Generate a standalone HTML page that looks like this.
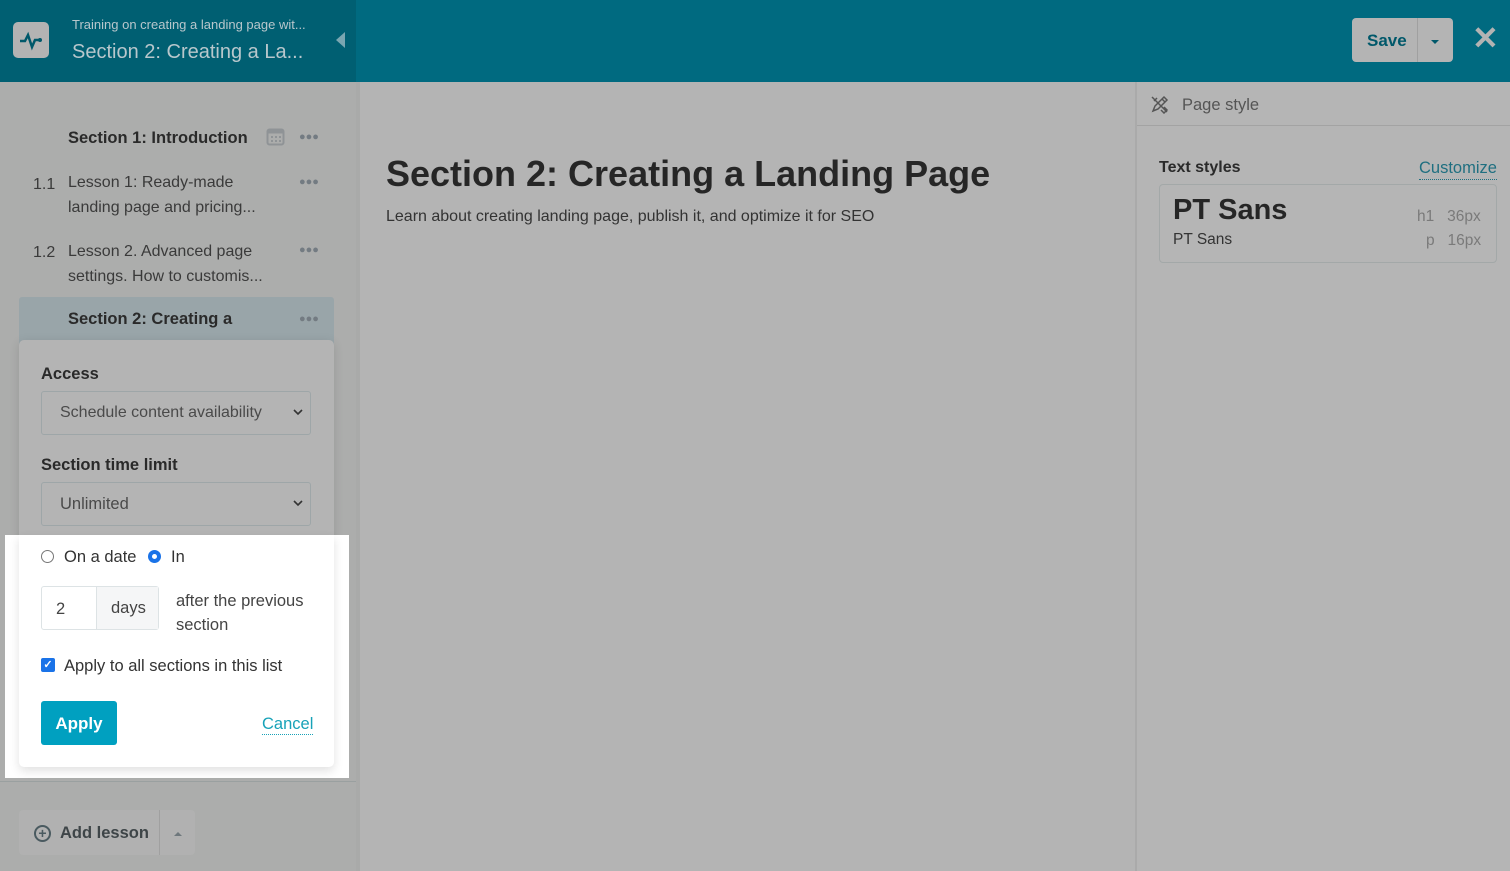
<!DOCTYPE html>
<html><head><style>
*{box-sizing:border-box;margin:0;padding:0}
body{width:1510px;height:871px;overflow:hidden;font-family:"Liberation Sans",sans-serif;background:#b4b4b4;position:relative;color:#2a2a2a}
.a{position:absolute}
.dots{position:absolute;color:#737b82;font-size:11px;letter-spacing:0px;font-weight:bold}
</style></head><body>
<div class="a" style="left:0;top:0;width:1510px;height:82px;background:#006a80"></div>
<div class="a" style="left:0;top:0;width:356px;height:82px;background:#005f72"></div>
<div class="a" style="left:13px;top:22px;width:36px;height:36px;background:#b3b3b3;border-radius:5px"></div>
<svg class="a" style="left:13px;top:22px" width="36" height="36"><path d="M7 19h5l3-6 4 12 3-7h5" stroke="#00586a" stroke-width="2.5" fill="none"/><circle cx="27" cy="18" r="2" fill="#00586a"/></svg>
<div class="a" style="left:72px;top:17px;font-size:13px;color:#b8c7cc">Training on creating a landing page wit...</div>
<div class="a" style="left:72px;top:41px;font-size:20px;color:#b8c7cc">Section 2: Creating a La...</div>
<div class="a" style="left:336px;top:32px;width:0;height:0;border-top:8px solid transparent;border-bottom:8px solid transparent;border-right:9px solid #7aa6b1"></div>
<div class="a" style="left:1352px;top:18px;width:101px;height:44px;background:#b4b4b4;border-radius:4px"></div>
<div class="a" style="left:1417px;top:18px;width:1px;height:44px;background:#a0a0a0"></div>
<div class="a" style="left:1367px;top:31px;font-size:17px;font-weight:bold;color:#00586a">Save</div>
<div class="a" style="left:1431px;top:40px;border-left:4px solid transparent;border-right:4px solid transparent;border-top:4px solid #00586a"></div>
<div class="a" style="left:1472px;top:22px;font-size:32px;color:#b3b3b3;font-weight:bold;line-height:32px">✕</div>

<div class="a" style="left:0;top:82px;width:356px;height:789px;background:#acadac"></div>
<div class="a" style="left:356px;top:82px;width:4px;height:789px;background:#a9aaa9"></div>
<div class="a" style="left:1135px;top:82px;width:375px;height:789px;background:#b5b5b5;border-left:2px solid #aaa"></div>

<div class="a" style="left:68px;top:129px;font-size:16.5px;font-weight:bold">Section 1: Introduction</div>
<svg class="a" style="left:266px;top:127px" width="19" height="19"><rect x="1.5" y="2.5" width="16" height="15" rx="2" fill="none" stroke="#8f9396" stroke-width="2"/><rect x="1.5" y="2.5" width="16" height="4" fill="#8f9396"/><g fill="#8f9396"><rect x="5" y="9" width="2" height="2"/><rect x="9" y="9" width="2" height="2"/><rect x="13" y="9" width="2" height="2"/><rect x="5" y="13" width="2" height="2"/><rect x="9" y="13" width="2" height="2"/><rect x="13" y="13" width="2" height="2"/></g></svg>
<div class="dots" style="left:299px;top:131px">●●●</div>
<div class="a" style="left:33px;top:172px;font-size:16px;line-height:25px;color:#3a3a3a">1.1</div>
<div class="a" style="left:68px;top:170px;font-size:16px;line-height:25px;color:#3a3a3a">Lesson 1: Ready-made<br>landing page and pricing...</div>
<div class="dots" style="left:299px;top:176px">●●●</div>
<div class="a" style="left:33px;top:240px;font-size:16px;line-height:25px;color:#3a3a3a">1.2</div>
<div class="a" style="left:68px;top:239px;font-size:16px;line-height:25px;color:#3a3a3a">Lesson 2. Advanced page<br>settings. How to customis...</div>
<div class="dots" style="left:299px;top:244px">●●●</div>
<div class="a" style="left:19px;top:297px;width:315px;height:50px;background:#99a5a9;border-radius:3px"></div>
<div class="a" style="left:68px;top:310px;font-size:16.5px;font-weight:bold">Section 2: Creating a</div>
<div class="dots" style="left:299px;top:313px">●●●</div>

<div class="a" style="left:19px;top:340px;width:315px;height:427px;background:#b4b4b4;border-radius:5px;box-shadow:0 2px 10px rgba(0,0,0,.12)"></div>
<div class="a" style="left:41px;top:365px;font-size:16.5px;font-weight:bold">Access</div>
<div class="a" style="left:41px;top:391px;width:270px;height:44px;border:1px solid #9ea6a8;border-radius:3px"></div>
<div class="a" style="left:60px;top:404px;font-size:16px;color:#4a4a4a">Schedule content availability</div>
<svg class="a" style="left:293px;top:409px" width="10" height="7"><path d="M1 1l4 4 4-4" stroke="#333" stroke-width="1.6" fill="none"/></svg>
<div class="a" style="left:41px;top:456px;font-size:16.5px;font-weight:bold">Section time limit</div>
<div class="a" style="left:41px;top:482px;width:270px;height:44px;border:1px solid #9ea6a8;border-radius:3px"></div>
<div class="a" style="left:60px;top:495px;font-size:16.5px;color:#4a4a4a">Unlimited</div>
<svg class="a" style="left:293px;top:500px" width="10" height="7"><path d="M1 1l4 4 4-4" stroke="#333" stroke-width="1.6" fill="none"/></svg>

<div class="a" style="left:5px;top:535px;width:344px;height:243px;background:#fff"></div>
<div class="a" style="left:19px;top:535px;width:315px;height:232px;background:#fff;border-radius:0 0 5px 5px;box-shadow:0 4px 10px rgba(0,0,0,.12)"></div>
<div class="a" style="left:41px;top:550px;width:13px;height:13px;border:1px solid #777;border-radius:50%"></div>
<div class="a" style="left:64px;top:548px;font-size:16.5px;color:#333">On a date</div>
<div class="a" style="left:148px;top:550px;width:13px;height:13px;border:4px solid #1a73e8;border-radius:50%;background:#fff"></div>
<div class="a" style="left:171px;top:548px;font-size:16.5px;color:#333">In</div>
<div class="a" style="left:41px;top:586px;width:118px;height:44px;border:1px solid #dde3e5;border-radius:3px"></div>
<div class="a" style="left:96px;top:587px;width:62px;height:42px;background:#f5f6f7;border-left:1px solid #dde3e5"></div>
<div class="a" style="left:56px;top:600px;font-size:16.5px;color:#444">2</div>
<div class="a" style="left:111px;top:599px;font-size:16.5px;color:#444">days</div>
<div class="a" style="left:176px;top:589px;font-size:16.5px;line-height:24px;color:#444">after the previous<br>section</div>
<div class="a" style="left:41px;top:658px;width:14px;height:14px;background:#1a73e8;border-radius:2px;color:#fff;font-size:11px;line-height:14px;text-align:center;font-weight:bold">✓</div>
<div class="a" style="left:64px;top:657px;font-size:16.5px;color:#333">Apply to all sections in this list</div>
<div class="a" style="left:41px;top:701px;width:76px;height:44px;background:#00a0c0;border-radius:3px;color:#fff;font-weight:bold;font-size:17px;text-align:center;line-height:46px">Apply</div>
<div class="a" style="left:262px;top:714px;font-size:16.5px;color:#17a2b8;border-bottom:1px dotted #17a2b8;line-height:20px">Cancel</div>

<div class="a" style="left:0;top:781px;width:356px;height:1px;background:#9aa0a0"></div>
<div class="a" style="left:19px;top:810px;width:176px;height:45px;background:#b1b1b1;border-radius:4px"></div>
<div class="a" style="left:159px;top:810px;width:1px;height:45px;background:#a0a0a0"></div>
<div class="a" style="left:34px;top:825px;width:17px;height:17px;border:2px solid #4a5a60;border-radius:50%;font-size:14px;line-height:13px;text-align:center;color:#4a5a60;font-weight:bold">+</div>
<div class="a" style="left:60px;top:824px;font-size:16.5px;font-weight:bold;color:#3e4548">Add lesson</div>
<div class="a" style="left:174px;top:832px;border-left:4px solid transparent;border-right:4px solid transparent;border-bottom:4px solid #6e777c"></div>

<div class="a" style="left:386px;top:153px;font-size:36px;font-weight:bold;color:#262626">Section 2: Creating a Landing Page</div>
<div class="a" style="left:386px;top:208px;font-size:16px;color:#333">Learn about creating landing page, publish it, and optimize it for SEO</div>

<div class="a" style="left:1137px;top:125px;width:373px;height:1px;background:#a3a3a3"></div>
<svg class="a" style="left:1150px;top:95px" width="19" height="19"><path d="M3 16l2-5 9-9 3 3-9 9z M12 4l3 3 M2 2l15 15 M4 6l3-3 M14 12l3 3-3 3-3-3" stroke="#555" stroke-width="1.5" fill="none"/></svg>
<div class="a" style="left:1182px;top:96px;font-size:16.5px;color:#555">Page style</div>
<div class="a" style="left:1159px;top:159px;font-size:16px;font-weight:bold">Text styles</div>
<div class="a" style="left:1419px;top:158px;font-size:16.5px;color:#1f6f80;border-bottom:1px dotted #1f6f80;line-height:21px">Customize</div>
<div class="a" style="left:1159px;top:184px;width:338px;height:79px;border:1px solid #a3a8a8;border-radius:4px"></div>
<div class="a" style="left:1173px;top:194px;font-size:29px;font-weight:bold;color:#262626">PT Sans</div>
<div class="a" style="left:1173px;top:231px;font-size:15.5px;color:#333">PT Sans</div>
<div class="a" style="left:1417px;top:208px;font-size:15.5px;color:#7a7a7a">h1&nbsp;&nbsp;&nbsp;36px</div>
<div class="a" style="left:1426px;top:232px;font-size:15.5px;color:#7a7a7a">p&nbsp;&nbsp;&nbsp;16px</div>
</body></html>
